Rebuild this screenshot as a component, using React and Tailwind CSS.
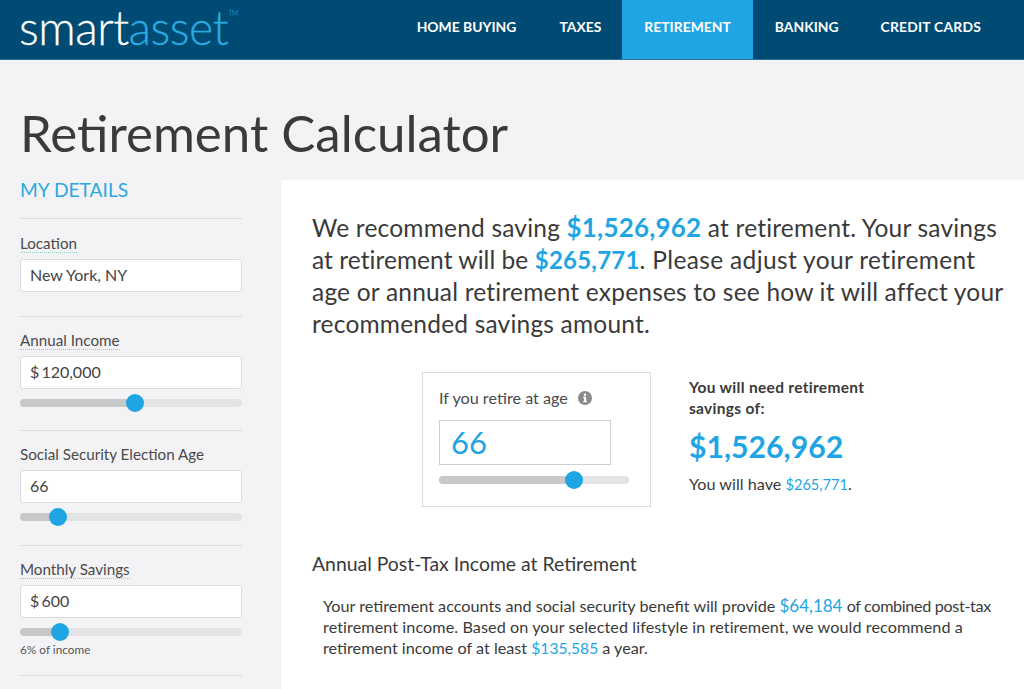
const font = "[font-family:Lato,'Open_Sans',sans-serif]";

function Slider({ pct, className = "" }) {
  return (
    <div className={`relative h-2 rounded-full bg-[#e3e3e5] ${className}`}>
      <div className="h-2 rounded-full bg-[#c8c8ca]" style={{ width: `${pct}%` }} />
      <div
        className="absolute top-1/2 h-[18px] w-[18px] -translate-x-1/2 -translate-y-1/2 rounded-full bg-[#1fa5e3]"
        style={{ left: `${pct}%` }}
      />
    </div>
  );
}

function Field({ label, value, dotted, pct, note, height, tight }) {
  return (
    <div className={`border-b border-[#dcdcde] ${height}`}>
      <div className="h-[27px] pt-[3px] text-[15.2px] leading-[17px] text-[#4a4a4a]">
        <span className={dotted ? "inline-block border-b border-dotted border-[#8fd0c0] leading-[17px]" : ""}>{label}</span>
      </div>
      <div className={`flex h-[33px] items-center rounded-[3px] border border-[#dcdcde] bg-white pb-[2px] pl-[9px] text-[16px] text-[#444] ${tight ? "[word-spacing:-2px]" : ""}`}>
        {value}
      </div>
      {pct !== undefined && <Slider pct={pct} className="mt-[10px]" />}
      {note && <div className="mt-[7px] text-[11.8px] leading-[13px] text-[#555]">{note}</div>}
    </div>
  );
}

const Blue = ({ children, className = "" }) => <span className={`text-[#1fa5e3] ${className}`}>{children}</span>;

export default function App() {
  return (
    <div className={`h-[689px] w-[1024px] overflow-hidden bg-[#f3f3f6] ${font}`}>
      <header className="flex h-[60px] items-center justify-between border-b border-[#2a7199] bg-[#004b73] pl-[19px] pr-[21px]">
        <div className="relative -mt-[5px] flex items-start text-[46.5px] font-light leading-[54px] tracking-[-0.5px] [-webkit-text-stroke:0.3px]">
          <span className="text-white">smart</span>
          <span className="text-[#2ba9e1]">asset</span>
          <span className="mt-[9px] text-[7px] leading-[8px] text-[#2ba9e1] [-webkit-text-stroke:0px]">TM</span>
        </div>
        <nav className="flex h-full text-[13.9px] font-bold text-white">
          <a className="flex items-center px-[22px] pb-[5px]">HOME BUYING</a>
          <a className="flex items-center px-[21px] pb-[5px]">TAXES</a>
          <a className="flex items-center bg-[#1fa5e3] px-[22px] pb-[5px]">RETIREMENT</a>
          <a className="flex items-center pb-[5px] pl-[22px] pr-[21px]">BANKING</a>
          <a className="flex items-center pb-[5px] pl-[21px] pr-[22px] tracking-[0.2px]">CREDIT CARDS</a>
        </nav>
      </header>

      <h1 className="h-[120px] pl-[20px] pt-[42px] text-[51px] font-normal leading-[62px] text-[#3a3a3a]">
        Retirement Calculator
      </h1>

      <div className="flex">
        <aside className="ml-[20px] w-[222px]">
          <div className="h-[39px] border-b border-[#dcdcde] text-[19.2px] leading-[20px] text-[#2ba9e1]">
            MY DETAILS
          </div>
          <div className="pt-[13px]">
            <Field label="Location" value="New York, NY" dotted height="h-[85px]" />
            <div className="pt-[12px]">
              <Field label="Annual Income" value="$ 120,000" tight dotted pct={52} height="h-[102px]" />
            </div>
            <div className="pt-[12px]">
              <Field label="Social Security Election Age" value="66" pct={17} height="h-[103px]" />
            </div>
            <div className="pt-[12px]">
              <Field label="Monthly Savings" value="$ 600" tight dotted pct={18} note="6% of income" height="h-[118px]" />
            </div>
          </div>
        </aside>

        <main className="ml-[39px] h-[509px] flex-1 bg-white pl-[31px] pt-[32px]">
          <p className="whitespace-nowrap text-[24.5px] leading-[32px] tracking-[0.2px] text-[#3a3a3a]">
            We recommend saving <Blue className="text-[26px] font-bold leading-[0]">$1,526,962</Blue> at retirement. Your savings
            <br />
            <span className="tracking-[0.06px]">at retirement will be</span>{" "}
            <Blue className="text-[24px] font-bold leading-[0]">$265,771</Blue>
            <span className="tracking-[0.35px]">. Please adjust your retirement</span>
            <br />
            age or annual retirement expenses to see how it will affect your
            <br />
            recommended savings amount.
          </p>

          <div className="ml-[110px] mt-[32px] flex">
            <div className="h-[135px] w-[229px] border border-[#dcdcde] px-[16px] pt-[15px]">
              <div className="flex items-center text-[16.2px] leading-[20px] text-[#4a4a4a]">
                If you retire at age
                <svg viewBox="0 0 16 16" className="ml-[10px] h-[14px] w-[14px]">
                  <circle cx="8" cy="8" r="8" fill="#8a8a8a" />
                  <rect x="6.9" y="6.6" width="2.4" height="6" fill="#fff" />
                  <rect x="5.8" y="6.6" width="2" height="1.2" fill="#fff" />
                  <rect x="5.8" y="11.6" width="4.6" height="1.2" fill="#fff" />
                  <circle cx="8" cy="4.3" r="1.4" fill="#fff" />
                </svg>
              </div>
              <div className="mt-[12px] flex h-[45px] w-[172px] items-center border border-[#cfcfd1] pl-[11px] text-[31px] text-[#1fa5e3]">
                66
              </div>
              <Slider pct={71} className="mt-[11px] w-[190px]" />
            </div>

            <div className="ml-[38px] w-[220px]">
              <div className="pt-[5px] text-[15.5px] font-bold leading-[21px] tracking-[0.3px] text-[#3a3a3a]">
                You will need retirement
                <br />
                savings of:
              </div>
              <div className="mt-[7px] text-[30.2px] font-bold leading-[40px] text-[#1fa5e3]">$1,526,962</div>
              <div className="mt-[8px] text-[16.2px] leading-[20px] text-[#3a3a3a]">
                You will have <Blue className="text-[14.6px]">$265,771</Blue>.
              </div>
            </div>
          </div>

          <h2 className="mt-[45px] text-[19.4px] font-normal leading-[24px] text-[#3a3a3a]">
            Annual Post-Tax Income at Retirement
          </h2>
          <p className="ml-[11px] mt-[19px] whitespace-nowrap text-[16.2px] leading-[21px] text-[#3a3a3a]">
            Your retirement accounts and social security benefit will provide{" "}
            <Blue className="text-[17px]">$64,184</Blue>{" "}
            <span className="tracking-[-0.35px]">of combined post-tax</span>
            <br />
            <span className="tracking-[0.07px]">retirement income. Based on your selected lifestyle in retirement, we would recommend a</span>
            <br />
            retirement income of at least <Blue className="text-[15.6px]">$135,585</Blue> a year.
          </p>
        </main>
      </div>
    </div>
  );
}
